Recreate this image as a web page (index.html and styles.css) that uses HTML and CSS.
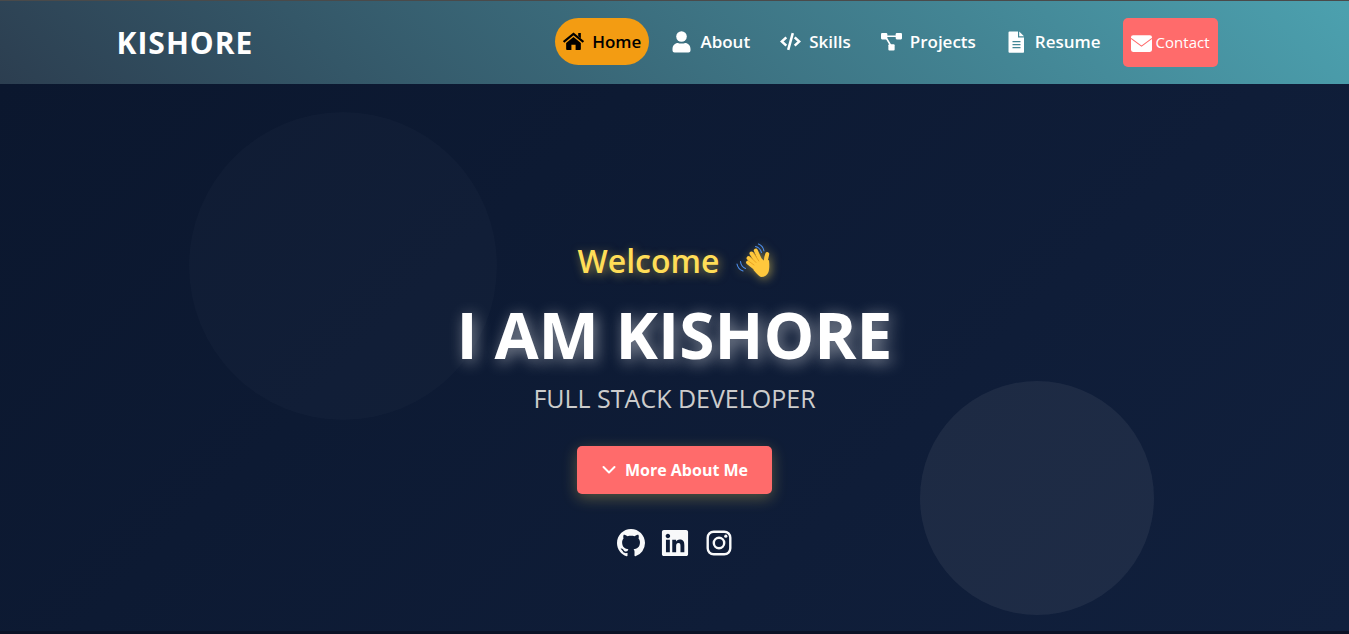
FILE: index.html
```html
<!DOCTYPE html>
<html lang="en">
<head>
<meta charset="utf-8">
<meta name="viewport" content="width=device-width, initial-scale=1">
<title>Kishore</title>
<link rel="stylesheet" href="styles.css">
</head>
<body>
<header class="site-header">
  <div class="header-inner">
    <a class="brand" href="#home">KISHORE</a>
    <nav class="nav">
      <a class="nav-link active" href="#home">
        <svg class="nav-icon" viewBox="0 0 20 18"><path fill="currentColor" d="M10 4.800 17 10.500v5.700a.8.8 0 0 1-.8.8H12v-5H8v5H3.800a.8.800 0 0 1-.8-.8v-5.700z"/><path fill="none" stroke="currentColor" stroke-width="2" d="M.6 9.400 10 1.700l9.400 7.700"/><path fill="currentColor" d="M14.500 1H17v5l-2.500-2z"/></svg>
        Home</a>
      <a class="nav-link" href="#about">
        <svg class="nav-icon tall" viewBox="0 0 20 22"><circle cx="10" cy="5.500" r="5.300" fill="currentColor"/><path fill="currentColor" d="M1 19.500v-1.500c0-3.500 2.500-6 5.500-6 1.200.7 5.800.7 7 0 3 0 5.500 2.500 5.500 6v1.500q0 2-2 2H3q-2 0-2-2z"/></svg>
        About</a>
      <a class="nav-link" href="#skills">
        <svg class="nav-icon" viewBox="0 0 20 18"><path fill="none" stroke="currentColor" stroke-width="2.400" d="M6 5 1.700 9 6 13M14 5l4.300 4L14 13M12.200 1 7.800 17"/></svg>
        Skills</a>
      <a class="nav-link" href="#projects">
        <svg class="nav-icon" viewBox="0 0 20 18"><path fill="none" stroke="currentColor" stroke-width="1.500" d="M3 4h14M4 4l6 10"/><rect y="1" width="6" height="6" rx="1" fill="currentColor"/><rect x="14" y="1" width="6" height="6" rx="1" fill="currentColor"/><rect x="7" y="11.500" width="6" height="6" rx="1" fill="currentColor"/></svg>
        Projects</a>
      <a class="nav-link" href="#resume">
        <svg class="nav-icon tall" viewBox="0 0 20 22"><path fill="currentColor" fill-rule="evenodd" d="M3 .5h8.500v6h6V21q0 .8-.8.800H3q-1 0-1-1V1.500q0-1 1-1zM6 10v1.200h8V10zm0 3v1.200h8V13zm0 3v1.200h8V16zM12.700.5l4.800 4.800h-4.800z"/></svg>
        Resume</a>
      <a class="nav-link contact" href="#contact">
        <svg class="nav-icon" viewBox="0 0 20 18"><rect y="2" width="20" height="16" rx="2" fill="currentColor"/><path class="envelope-fold" d="m0 5 10 7.500L20 5"/></svg>
        Contact</a>
    </nav>
  </div>
</header>
<main class="hero" id="home">
  <span class="circle circle-left"></span>
  <span class="circle circle-right"></span>
  <div class="hero-content">
    <p class="welcome">Welcome
      <svg class="wave" viewBox="0 0 36 36" role="img" aria-label="Waving hand"><g fill="none" stroke="#ffc83d" stroke-linecap="round" stroke-width="4"><path d="m25 19-5.200-11.500M22 20l-6.500-9.500M20 22l-7.500-7M19 25l-7-5.500"/><path d="M30.500 23q-1.500-6 .8-12"/></g><path fill="#ffc83d" d="m17.500 27 2-9 6-2.500 3.500 3 4-1.500q.8 8-.5 12-2 5-7.500 5-2.500-1-7.500-7z"/><path fill="none" stroke="#e39b1c" stroke-linecap="round" stroke-width=".8" d="m17.800 10 5 8M14.500 14l5.500 5.500M12.500 18l5.500 4"/><path fill="none" stroke="#4c8dec" stroke-linecap="round" stroke-width="1.100" d="M19.500 3.500q4.500 1 6 6M22.500 1q4.500 1.800 5.500 7M4.500 18.500q.5 5 5 7M1 21q.8 5 6 7"/></svg>
    </p>
    <h1 class="name">I AM KISHORE</h1>
    <p class="role">FULL STACK DEVELOPER</p>
    <a class="more" href="#about">
      <svg class="chevron" viewBox="0 0 16 16"><path d="m2.500 5 5.500 5.500L13.500 5"/></svg>
      More About Me</a>
    <div class="socials">
      <a class="social" href="#github" aria-label="GitHub"><svg class="social-icon" viewBox="0 0 16 16"><path fill="currentColor" d="M8 0C3.580 0 0 3.580 0 8c0 3.540 2.290 6.530 5.470 7.590.4.070.55-.17.55-.38 0-.19-.01-.82-.01-1.490-2.010.37-2.530-.49-2.690-.94-.09-.23-.48-.94-.82-1.130-.28-.15-.68-.52-.01-.53.63-.01 1.080.58 1.230.82.72 1.210 1.870.87 2.330.66.070-.52.28-.87.51-1.070-1.780-.2-3.640-.89-3.640-3.950 0-.87.31-1.590.82-2.150-.08-.2-.36-1.020.08-2.120 0 0 .67-.21 2.200.82.64-.18 1.320-.27 2-.27s1.360.09 2 .27c1.530-1.040 2.200-.82 2.200-.82.44 1.100.16 1.920.08 2.120.51.56.82 1.270.82 2.150 0 3.070-1.870 3.750-3.650 3.950.29.25.54.73.54 1.480 0 1.070-.01 1.930-.01 2.200 0 .21.15.46.55.38A8.010 8.010 0 0 0 16 8c0-4.420-3.580-8-8-8"/></svg></a>
      <a class="social" href="#linkedin" aria-label="LinkedIn"><svg class="social-icon" viewBox="-16 16 480 480"><path fill="currentColor" d="M416 32H31.900C14.300 32 0 46.500 0 64.300v383.400C0 465.500 14.300 480 31.900 480H416c17.600 0 32-14.500 32-32.300V64.300c0-17.800-14.400-32.300-32-32.300zM135.400 416H69V202.200h66.500V416zm-33.200-243c-21.300 0-38.500-17.300-38.500-38.500S80.900 96 102.200 96c21.200 0 38.500 17.300 38.500 38.500 0 21.300-17.200 38.500-38.500 38.500zm282.100 243h-66.400V312c0-24.800-.5-56.700-34.500-56.700-34.600 0-39.900 27-39.900 54.900V416h-66.400V202.200h63.700v29.200h.9c8.900-16.800 30.600-34.500 62.900-34.500 67.200 0 79.700 44.300 79.700 101.900V416z"/></svg></a>
      <a class="social" href="#instagram" aria-label="Instagram"><svg class="social-icon" viewBox="0 0 28 28"><rect x="2.700" y="2.700" width="22.600" height="22.600" rx="6" fill="none" stroke="currentColor" stroke-width="2.400"/><circle cx="14" cy="14" r="5.200" fill="none" stroke="currentColor" stroke-width="2.400"/><circle cx="20.800" cy="7.200" r="1.600" fill="currentColor"/></svg></a>
    </div>
  </div>
</main>
</body>
</html>
```
FILE: styles.css
```css
* {
  box-sizing: border-box;
}

body {
  display: flex;
  flex-direction: column;
  min-height: 100vh;
  margin: 0;
  padding-bottom: 3px;
  background: #0b1226;
  color: #fff;
  font-family: "Segoe UI", "Open Sans", "Noto Sans", sans-serif;
}

a {
  color: inherit;
  text-decoration: none;
}

.site-header {
  border-top: 1px solid #4a4a4a;
  background: linear-gradient(45deg, #2c3e50, #4ca1af);
}

.header-inner {
  display: flex;
  justify-content: space-between;
  width: 100%;
  max-width: 1140px;
  min-height: 83px;
  margin: 0 auto;
  padding: 17px 27px 16px 12px;
}

.brand {
  font-size: 30px;
  font-weight: 700;
  line-height: 50px;
  letter-spacing: 1px;
}

.nav {
  display: flex;
  align-items: flex-start;
  gap: 14px;
}

.nav-link {
  display: flex;
  align-items: center;
  gap: 8px;
  padding: 0 8px;
  font-size: 17px;
  font-weight: 600;
  line-height: 47px;
}

.nav-icon {
  width: 21px;
  height: 19px;
}

.nav-icon.tall {
  height: 22px;
}

.active {
  border-radius: 24px;
  background: #f39c12;
  color: #000;
}

.contact {
  gap: 4px;
  border-radius: 5px;
  background: #ff6b6b;
  font-size: 15px;
  font-weight: 400;
  line-height: 49px;
}

.envelope-fold {
  fill: none;
  stroke: #ff6b6b;
  stroke-width: 1px;
}

.hero {
  position: relative;
  flex: 1;
  display: flex;
  align-items: center;
  justify-content: center;
  padding: 79px 16px 0;
  overflow: hidden;
  background: linear-gradient(135deg, #0b172e, #11203d);
}

.circle {
  position: absolute;
  border-radius: 50%;
}

.circle-left {
  top: 28px;
  left: 14%;
  width: 308px;
  height: 308px;
  background: rgba(255, 255, 255, 0.02);
}

.circle-right {
  right: 195px;
  bottom: 16px;
  width: 234px;
  height: 234px;
  background: rgba(255, 255, 255, 0.06);
}

.hero-content {
  position: relative;
  display: flex;
  flex-direction: column;
  align-items: center;
  text-align: center;
}

.welcome,
.name,
.role {
  margin: 0;
}

.welcome {
  display: flex;
  align-items: center;
  gap: 16px;
  color: #ffdd57;
  font-size: 32px;
  font-weight: 600;
  line-height: 48px;
  text-shadow: 2px 2px 10px rgba(255, 221, 87, 0.5);
}

.wave {
  width: 36px;
  height: 36px;
  filter: drop-shadow(2px 2px 5px rgba(255, 221, 87, 0.5));
}

.name {
  margin-top: 10px;
  font-size: 64px;
  font-weight: 700;
  line-height: 80px;
  text-shadow: 3px 3px 15px rgba(255, 255, 255, 0.5);
}

.role {
  margin-top: 5px;
  color: #ccc;
  font-size: 25px;
  line-height: 36px;
}

.more {
  display: flex;
  align-items: center;
  gap: 8px;
  margin-top: 30px;
  padding: 0 24px;
  border-radius: 5px;
  background: #ff6b6b;
  box-shadow: 0 4px 15px rgba(255, 221, 87, 0.3);
  font-size: 16px;
  font-weight: 700;
  line-height: 48px;
}

.chevron {
  width: 16px;
  height: 16px;
  fill: none;
  stroke: currentColor;
  stroke-width: 2px;
  stroke-linecap: round;
  stroke-linejoin: round;
}

.socials {
  display: flex;
  gap: 16px;
  margin-top: 35px;
  color: #f8f9fa;
}

.social {
  display: flex;
}

.social-icon {
  width: 28px;
  height: 28px;
}
```
